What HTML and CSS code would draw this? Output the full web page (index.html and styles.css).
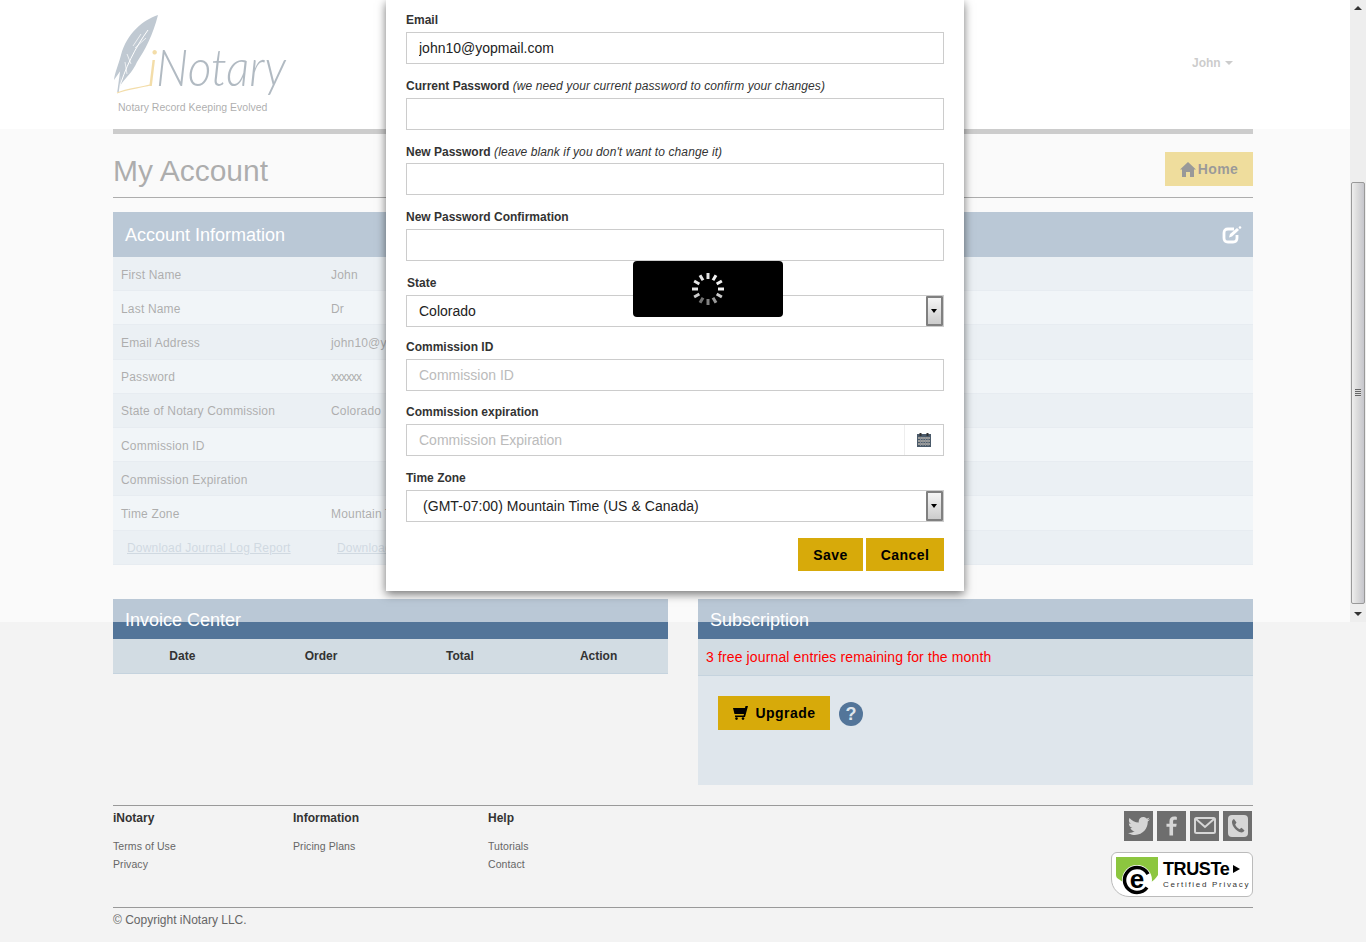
FILE: index.html
```html
<!DOCTYPE html>
<html>
	<head>
		<meta charset="utf-8">
		<title>iNotary - My Account</title>
		<link rel="stylesheet" href="styles.css">
	</head>
	<body>
		<div id="top">
			<div class="wrap top-inner">
				<svg class="logo" width="180" height="120" viewBox="0 0 180 120">
					<path d="M45 15 C30 20 14 33 8 55 C5 66 2 72 1 80 L8 70 L7 86 C12 78 20 72 24 62 C32 50 40 35 45 15 Z" fill="#61788e"/>
					<path d="M35 30 C22 48 12 68 5 92" stroke="#fff" stroke-width="1" fill="none"/>
					<path d="M28 34 L20 46 M22 48 L33 38 M14 54 L18 64 M12 62 L14 74" stroke="#fff" stroke-width=".7" fill="none"/>
					<path d="M5 92 L8 70" stroke="#61788e" stroke-width="1.5" fill="none"/>
					<path d="M4 93 C14 89 26 88 37 85" stroke="#e1aa2a" stroke-width="1.2" fill="none"/>
					<text class="logo-i" x="34" y="86">i</text>
					<text class="logo-name" x="43" y="86" textLength="130" lengthAdjust="spacingAndGlyphs">Notary</text>
					<text class="logo-tag" x="5" y="111">Notary Record Keeping Evolved</text>
				</svg>
				<div class="user">John <span class="caret"></span></div>
			</div>
		</div>

		<div class="wrap main">
			<div class="title-row">
				<h1>My Account</h1>
				<a class="btn btn-home">
					<svg width="16" height="15" viewBox="0 0 16 15"><path d="M8 0 L16 7.5 L14 7.5 L14 15 L10 15 L10 10 L6 10 L6 15 L2 15 L2 7.5 L0 7.5 Z" fill="#000"/></svg>
					Home
				</a>
			</div>

			<div class="panel-head">
				<h2>Account Information</h2>
				<svg width="20" height="18" viewBox="0 0 20 18">
					<path d="M12 3 H6 Q2 3 2 7 V12 Q2 16 6 16 H11 Q15 16 15 12 V9" stroke="#fff" stroke-width="2.8" fill="none"/>
					<path d="M7 11.5 L8 8 L15 2 L17 4 L10 10.5 Z" fill="#fff"/>
					<circle cx="18" cy="1.5" r="1.3" fill="#fff"/>
				</svg>
			</div>
			<div class="info-row"><span class="info-key">First Name</span><span>John</span></div>
			<div class="info-row alt"><span class="info-key">Last Name</span><span>Dr</span></div>
			<div class="info-row"><span class="info-key">Email Address</span><span>john10@yopmail.com</span></div>
			<div class="info-row alt"><span class="info-key">Password</span><span class="pw">xxxxxx</span></div>
			<div class="info-row"><span class="info-key">State of Notary Commission</span><span>Colorado</span></div>
			<div class="info-row alt"><span class="info-key">Commission ID</span><span></span></div>
			<div class="info-row"><span class="info-key">Commission Expiration</span><span></span></div>
			<div class="info-row alt"><span class="info-key">Time Zone</span><span>Mountain Time (US &amp; Canada)</span></div>
			<div class="info-row links">
				<a class="dl dl-first">Download Journal Log Report</a>
				<a class="dl">Download Invoice Report</a>
			</div>

			<div class="columns">
				<div class="col">
					<div class="col-head">Invoice Center</div>
					<div class="invoice-head">
						<span>Date</span><span>Order</span><span>Total</span><span>Action</span>
					</div>
				</div>
				<div class="col sub">
					<div class="col-head">Subscription</div>
					<div class="sub-note">3 free journal entries remaining for the month</div>
					<div class="sub-actions">
						<a class="btn btn-upgrade">
							<svg width="15" height="14" viewBox="0 0 15 14">
								<path d="M15 0 L12.5 0 L12 2 L0 2 L1.5 8 L11 8 L10.6 9.5 L2 9.5 L2 11 L12 11 Z" fill="#000"/>
								<circle cx="3.5" cy="12.6" r="1.3" fill="#000"/>
								<circle cx="10" cy="12.6" r="1.3" fill="#000"/>
							</svg>
							Upgrade
						</a>
						<span class="help">?</span>
					</div>
				</div>
			</div>

			<div class="footer">
				<div class="foot-col c1">
					<h4>iNotary</h4>
					<a>Terms of Use</a>
					<a>Privacy</a>
				</div>
				<div class="foot-col c2">
					<h4>Information</h4>
					<a>Pricing Plans</a>
				</div>
				<div class="foot-col c3">
					<h4>Help</h4>
					<a>Tutorials</a>
					<a>Contact</a>
				</div>
				<div class="foot-right">
					<div class="social">
						<span class="soc"><svg width="22" height="22" viewBox="0 0 24 24"><path fill="#d6d6d6" d="M23.954 4.569c-.885.389-1.83.654-2.825.775 1.014-.611 1.794-1.574 2.163-2.723-.951.555-2.005.959-3.127 1.184-.896-.959-2.173-1.559-3.591-1.559-2.717 0-4.92 2.203-4.92 4.917 0 .39.045.765.127 1.124C7.691 8.094 4.066 6.13 1.64 3.161c-.427.722-.666 1.561-.666 2.475 0 1.71.87 3.213 2.188 4.096-.807-.026-1.566-.248-2.228-.616v.061c0 2.385 1.693 4.374 3.946 4.827-.413.111-.849.171-1.296.171-.314 0-.615-.03-.916-.086.631 1.953 2.445 3.377 4.604 3.417-1.68 1.319-3.809 2.105-6.102 2.105-.39 0-.779-.023-1.17-.067 2.189 1.394 4.768 2.209 7.557 2.209 9.054 0 13.999-7.496 13.999-13.986 0-.209 0-.42-.015-.63.961-.689 1.8-1.56 2.46-2.548l-.047-.02z"/></svg></span>
						<span class="soc"><svg width="11" height="22" viewBox="0 0 14 24"><path fill="#d6d6d6" d="M9 24 V13 H13 L13.6 9 H9 V6.5 C9 5 9.5 4.2 11 4.2 H13.8 V0.4 C13 0.2 11.8 0 10.4 0 C6.8 0 4.4 2 4.4 6 V9 H0.6 V13 H4.4 V24 Z"/></svg></span>
						<span class="soc"><svg width="22" height="17" viewBox="0 0 22 17"><rect x="1" y="1" width="20" height="15" rx="1.5" fill="none" stroke="#d6d6d6" stroke-width="2"/><path d="M2 2 L11 10 L20 2" fill="none" stroke="#d6d6d6" stroke-width="2"/></svg></span>
						<span class="soc"><svg width="20" height="22" viewBox="0 0 20 22"><rect x="0" y="0" width="20" height="22" rx="4" fill="#d6d6d6"/><path d="M6 4 L8.5 7.5 L7.2 9.5 C8 11.5 9.5 13.2 11.5 14.2 L13.5 12.8 L16.5 15.5 C15.5 17.5 13.5 18 11.5 17 C7.5 15 4.5 11.5 4 7.5 C3.8 6 4.6 4.6 6 4 Z" fill="#6e6e6e"/></svg></span>
					</div>
					<div class="truste">
						<svg class="truste-mark" width="48" height="44" viewBox="0 0 48 44">
							<path d="M4 3 H46 V21 C42 27 40 27 38 29 L12 29 C8 25 4 25 4 21 Z" fill="#8cc63f"/>
							<circle cx="25" cy="26" r="15" fill="#fff"/>
							<circle cx="25" cy="26" r="12.5" fill="none" stroke="#000" stroke-width="3.5" stroke-dasharray="64 14" stroke-dashoffset="-8"/>
							<text class="truste-e" x="25" y="34" text-anchor="middle">e</text>
						</svg>
						<div class="truste-text">
							<div class="truste-name">TRUSTe<span class="truste-arrow"></span></div>
							<div class="truste-sub">Certified Privacy</div>
						</div>
					</div>
				</div>
			</div>
			<div class="copyright">© Copyright iNotary LLC.</div>
		</div>

		<div id="overlay"></div>

		<div id="scrollbar">
			<span class="arrow-up"></span>
			<div class="thumb"><span class="grip"></span></div>
			<span class="arrow-down"></span>
		</div>

		<div id="modal">
			<div class="field">
				<label>Email</label>
				<input type="text" value="john10@yopmail.com">
			</div>
			<div class="field f65">
				<label>Current Password <em>(we need your current password to confirm your changes)</em></label>
				<input type="password">
			</div>
			<div class="field">
				<label class="low">New Password <em>(leave blank if you don't want to change it)</em></label>
				<input type="password">
			</div>
			<div class="field">
				<label>New Password Confirmation</label>
				<input type="password">
			</div>
			<div class="field f64">
				<label class="nudge">State</label>
				<div class="select">Colorado<span class="select-btn"></span></div>
			</div>
			<div class="field f65">
				<label>Commission ID</label>
				<input type="text" placeholder="Commission ID">
			</div>
			<div class="field">
				<label>Commission expiration</label>
				<div class="date-box">
					<input type="text" placeholder="Commission Expiration">
					<span class="date-btn">
						<svg width="14" height="14" viewBox="0 0 14 14">
							<rect x="0" y="1" width="14" height="13" fill="#4a5a6a"/>
							<rect x="2.5" y="0" width="2" height="3" fill="#333"/>
							<rect x="9.5" y="0" width="2" height="3" fill="#333"/>
							<path d="M1 5 H13 M1 8 H13 M1 11 H13" stroke="#b9b4aa" stroke-width="1.4"/>
							<path d="M3.5 4 V13 M6 4 V13 M8.5 4 V13 M11 4 V13" stroke="#8a8f96" stroke-width="1"/>
						</svg>
					</span>
				</div>
			</div>
			<div class="field tz">
				<label>Time Zone</label>
				<div class="select select-tz">(GMT-07:00) Mountain Time (US &amp; Canada)<span class="select-btn"></span></div>
			</div>
			<div class="modal-btns">
				<a class="btn btn-save">Save</a>
				<a class="btn btn-cancel">Cancel</a>
			</div>
		</div>

		<div id="loading">
			<svg width="36" height="36" viewBox="-18 -18 36 36">
				<g stroke="#fff" stroke-width="3">
					<line x1="0" y1="-10" x2="0" y2="-16" opacity=".9"/>
					<line x1="0" y1="-10" x2="0" y2="-16" opacity=".95" transform="rotate(30)"/>
					<line x1="0" y1="-10" x2="0" y2="-16" opacity=".95" transform="rotate(60)"/>
					<line x1="0" y1="-10" x2="0" y2="-16" opacity=".95" transform="rotate(90)"/>
					<line x1="0" y1="-10" x2="0" y2="-16" opacity=".8" transform="rotate(120)"/>
					<line x1="0" y1="-10" x2="0" y2="-16" opacity=".6" transform="rotate(150)"/>
					<line x1="0" y1="-10" x2="0" y2="-16" opacity=".5" transform="rotate(180)"/>
					<line x1="0" y1="-10" x2="0" y2="-16" opacity=".45" transform="rotate(210)"/>
					<line x1="0" y1="-10" x2="0" y2="-16" opacity=".8" transform="rotate(240)"/>
					<line x1="0" y1="-10" x2="0" y2="-16" opacity=".9" transform="rotate(270)"/>
					<line x1="0" y1="-10" x2="0" y2="-16" opacity=".9" transform="rotate(300)"/>
					<line x1="0" y1="-10" x2="0" y2="-16" opacity=".9" transform="rotate(330)"/>
				</g>
			</svg>
		</div>
	</body>
</html>
```

FILE: styles.css
```css
* {
	margin: 0;
	padding: 0;
	box-sizing: border-box;
}

html, body {
	height: 942px;
	overflow: hidden;
}

body {
	position: relative;
	background: #f3f3f3;
	color: #333;
	font-family: "Liberation Sans", Arial, sans-serif;
	font-size: 12px;
}

.wrap {
	width: 1140px;
	margin: 0 auto;
}

/* header */
#top {
	height: 129px;
	background: #fff;
}

.top-inner {
	display: flex;
	justify-content: space-between;
	height: 129px;
}

.logo {
	display: block;
	overflow: visible;
}

.logo-i {
	font: italic 300 52px Lato, sans-serif;
	fill: #e1aa2a;
}

.logo-name {
	font: italic 300 52px Lato, sans-serif;
	fill: #3e5468;
}

.logo-tag {
	font: 10.5px "Liberation Sans", sans-serif;
	fill: #333;
}

.user {
	margin: 56px 20px 0 0;
	color: #808080;
	font-size: 12px;
	font-weight: bold;
	line-height: 14px;
	height: 14px;
}

.caret {
	display: inline-block;
	margin-left: 1px;
	vertical-align: 2px;
	border-top: 4px solid #808080;
	border-left: 4px solid transparent;
	border-right: 4px solid transparent;
}

/* main */
.main {
	border-top: 5px solid #808080;
}

.title-row {
	display: flex;
	justify-content: space-between;
	height: 64px;
	border-bottom: 1px solid #333;
}

h1 {
	padding-top: 20px;
	font-size: 30px;
	font-weight: normal;
	line-height: 34px;
}

.btn {
	display: flex;
	align-items: center;
	justify-content: center;
	background: #d7aa0a;
	color: #000;
	font-size: 14px;
	font-weight: bold;
	letter-spacing: .45px;
}

.btn-home {
	gap: 2px;
	width: 88px;
	height: 34px;
	margin-top: 18px;
}

.panel-head {
	display: flex;
	align-items: center;
	justify-content: space-between;
	height: 45px;
	margin-top: 14px;
	padding: 0 11px 0 12px;
	background: #537599;
}

.panel-head h2 {
	padding-top: 2px;
	color: #fff;
	font-size: 18px;
	font-weight: normal;
}

.info-row {
	display: flex;
	align-items: center;
	height: 34.2px;
	padding: 2px 0 0 8px;
	background: #cdd9e3;
	border-bottom: 1px solid #c3d0db;
	letter-spacing: .18px;
}

.info-row.alt {
	background: #dce6ed;
}

.info-key {
	width: 210px;
}

.pw {
	letter-spacing: -1px;
}

.info-row.links {
	background: #cdd9e3;
	padding-left: 14px;
}

.dl {
	color: #8aa0b5;
	text-decoration: underline;
	font-size: 12px;
}

.dl-first {
	width: 210px;
}

.columns {
	display: flex;
	gap: 30px;
	margin-top: 34px;
}

.col {
	width: 555px;
}

.col.sub {
	height: 186px;
	background: #dfe6ec;
}

.col-head {
	height: 40px;
	padding: 10px 12px 0;
	background: #537599;
	color: #fff;
	font-size: 18px;
	line-height: 22px;
}

.invoice-head {
	display: grid;
	grid-template-columns: repeat(4, 1fr);
	height: 35px;
	background: #d2dce3;
	border-bottom: 1px solid #c5d3de;
	font-weight: bold;
	line-height: 34px;
	text-align: center;
}

.sub-note {
	height: 37px;
	padding-left: 8px;
	background: #d2dce3;
	border-bottom: 1px solid #c5d3de;
	color: #f00;
	font-size: 14px;
	letter-spacing: .13px;
	line-height: 36px;
}

.sub-actions {
	display: flex;
	align-items: center;
	gap: 9px;
	padding: 20px 0 0 20px;
}

.btn-upgrade {
	gap: 8px;
	width: 112px;
	height: 34px;
}

.help {
	width: 24px;
	height: 24px;
	margin-top: 2px;
	border-radius: 50%;
	background: #537599;
	color: #dfe6ec;
	font-size: 18px;
	font-weight: bold;
	line-height: 24px;
	text-align: center;
}

/* footer */
.footer {
	display: flex;
	height: 103px;
	margin-top: 20px;
	border-top: 1px solid #999;
	border-bottom: 1px solid #999;
}

.foot-col {
	padding-top: 5px;
}

.foot-col.c1 { width: 180px; }
.foot-col.c2 { width: 195px; }
.foot-col.c3 { width: 200px; }

.foot-col h4 {
	margin-bottom: 12px;
	font-size: 12px;
	line-height: 14px;
}

.foot-col a {
	display: block;
	color: #666;
	font-size: 10.5px;
	letter-spacing: .08px;
	line-height: 18px;
}

.foot-right {
	flex: 1;
	display: flex;
	flex-direction: column;
	align-items: flex-end;
}

.social {
	display: flex;
	gap: 4px;
	margin: 5px 1px 0 0;
}

.soc {
	display: flex;
	align-items: center;
	justify-content: center;
	width: 29px;
	height: 30px;
	background: #6e6e6e;
}

.truste {
	display: flex;
	width: 142px;
	height: 45px;
	margin-top: 11px;
	background: #fff;
	border: 1px solid #bbb;
	border-radius: 6px 6px 6px 18px;
}

.truste-mark {
	display: block;
	flex: none;
	margin-top: 1px;
}

.truste-e {
	font: bold 26px "Liberation Sans", sans-serif;
	fill: #000;
}

.truste-text {
	padding: 5px 0 0 3px;
	white-space: nowrap;
}

.truste-name {
	color: #000;
	font-size: 18px;
	font-weight: bold;
	letter-spacing: -.4px;
	line-height: 22px;
}

.truste-arrow {
	display: inline-block;
	margin-left: 4px;
	vertical-align: 2px;
	border-left: 7px solid #000;
	border-top: 4px solid transparent;
	border-bottom: 4px solid transparent;
}

.truste-sub {
	color: #333;
	font-size: 8px;
	letter-spacing: 1.7px;
	line-height: 10px;
}

.copyright {
	padding-top: 5px;
	color: #666;
	font-size: 12px;
	line-height: 14px;
}

/* white sheet over the page, only as tall as the old viewport */
#overlay {
	position: absolute;
	top: 0;
	left: 0;
	width: 1350px;
	height: 622px;
	background: rgba(255, 255, 255, .6);
}

#scrollbar {
	position: absolute;
	top: 0;
	right: 0;
	width: 16px;
	height: 622px;
	background: #eee;
}

.thumb {
	position: absolute;
	top: 182px;
	left: 1px;
	width: 14px;
	height: 422px;
	border: 1px solid #999;
	border-radius: 2px;
	background: linear-gradient(to right, #eee, #ddd 40%, #c6c6cc);
}

.grip {
	position: absolute;
	top: 206px;
	left: 3px;
	width: 6px;
	height: 8px;
	background: repeating-linear-gradient(to bottom, #666 0, #666 1px, #ddd 1px, #ddd 2px);
}

.arrow-up, .arrow-down {
	position: absolute;
	left: 4px;
	border-left: 4px solid transparent;
	border-right: 4px solid transparent;
}

.arrow-up {
	top: 6px;
	border-bottom: 4px solid #333;
}

.arrow-down {
	top: 612px;
	border-top: 4px solid #333;
}

/* modal */
#modal {
	position: absolute;
	top: 0;
	left: 386px;
	width: 578px;
	height: 591px;
	padding: 12px 20px 0;
	background: #fff;
	box-shadow: 0 3px 9px rgba(0, 0, 0, .55);
}

.field {
	height: 66px;
}

.field.f65 {
	height: 65px;
}

.field.f64 {
	height: 64px;
}

.field.tz {
	height: 68px;
}

.field label {
	display: block;
	height: 20px;
	font-size: 12px;
	font-weight: bold;
	line-height: 17px;
	color: #333;
}

.field label em {
	font-weight: normal;
	letter-spacing: .1px;
}

.field label.nudge {
	margin-left: 1px;
}

.field label.low {
	padding-top: 1px;
}

.field input, .select {
	display: block;
	width: 538px;
	height: 32px;
	padding: 0 12px;
	border: 1px solid #ccc;
	background: #fff;
	color: #222;
	font-family: "Liberation Sans", Arial, sans-serif;
	font-size: 14px;
	line-height: 30px;
	outline: none;
}

.field input::placeholder {
	color: #bbb;
	opacity: 1;
}

.select {
	position: relative;
}

.select-tz {
	padding-left: 16px;
	letter-spacing: .05px;
}

.select-btn {
	position: absolute;
	top: 0;
	right: 0;
	width: 17px;
	height: 30px;
	border: 2px solid #808080;
	border-radius: 1px;
	background: linear-gradient(to bottom, #f5f5f5, #ccc);
}

.select-btn::after {
	content: "";
	position: absolute;
	top: 11px;
	left: 3px;
	border-top: 4px solid #000;
	border-left: 3.5px solid transparent;
	border-right: 3.5px solid transparent;
}

.date-box {
	display: flex;
	width: 538px;
	height: 32px;
	border: 1px solid #ccc;
}

.field .date-box input {
	flex: 1;
	width: auto;
	height: 30px;
	border: 0;
}

.date-btn {
	display: flex;
	align-items: center;
	justify-content: center;
	width: 39px;
	border-left: 1px solid #eee;
}

.modal-btns {
	display: flex;
	justify-content: flex-end;
	gap: 3px;
}

.btn-save {
	width: 65px;
	height: 33px;
}

.btn-cancel {
	width: 78px;
	height: 33px;
}

#loading {
	position: absolute;
	top: 261px;
	left: 633px;
	display: flex;
	align-items: center;
	justify-content: center;
	width: 150px;
	height: 56px;
	border-radius: 4px;
	background: #000;
}
```
